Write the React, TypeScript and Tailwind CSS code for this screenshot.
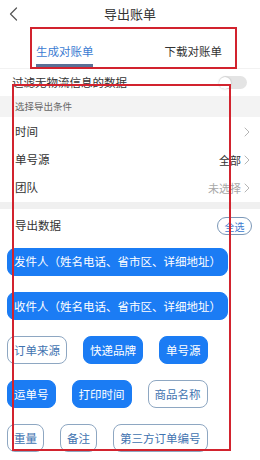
import React from 'react';

const font = { fontFamily: '"Noto Sans CJK SC", "Noto Sans", sans-serif' };

const Chevron = () => (
  <svg width="6" height="10" viewBox="0 0 6 10" fill="none" className="ml-[3px]">
    <path d="M1 1l4 4-4 4" stroke="#b5b5b5" strokeWidth="1" strokeLinecap="round" strokeLinejoin="round" />
  </svg>
);

const Row = ({ label, value, muted }: { label: string; value?: string; muted?: boolean }) => (
  <div className="flex h-[28px] items-center justify-between pl-[15px] pr-[10px]">
    <span className="text-[11.5px] text-[#333]">{label}</span>
    <div className="flex items-center">
      {value && <span className={`text-[11px] ${muted ? 'text-[#a8a8a8]' : 'text-[#333]'}`}>{value}</span>}
      <Chevron />
    </div>
  </div>
);

const Chip = ({ text, on }: { text: string; on?: boolean }) => (
  <div
    className={
      on
        ? 'flex h-[28px] items-center rounded-[8px] border border-[#1b7cf4] bg-[#1b7cf4] px-[6px] text-[11.5px] text-white'
        : 'flex h-[28px] items-center rounded-[8px] border border-[#8ea7c2] bg-white px-[6px] text-[11.5px] text-[#3f73b0]'
    }
  >
    {text}
  </div>
);

export default function App() {
  return (
    <div className="relative h-[460px] w-[260px] overflow-hidden bg-white" style={font}>
      {/* header */}
      <div className="relative flex h-[28px] items-center justify-center">
        <svg width="9" height="14" viewBox="0 0 9 14" fill="none" className="absolute left-[9px] top-[7px]">
          <path d="M7.5 1L1.5 7l6 6" stroke="#555" strokeWidth="1.2" strokeLinecap="round" strokeLinejoin="round" />
        </svg>
        <span className="text-[13px] text-[#333]">导出账单</span>
      </div>

      {/* tabs */}
      <div className="flex h-[40px] items-start">
        <div className="ml-[36px] flex flex-col items-center pt-[15px]">
          <span className="block text-[11.5px] leading-[16px] text-[#3b7cd2]">生成对账单</span>
          <div className="mt-[5px] h-[2.5px] w-[57px] bg-[#5a7096]" />
        </div>
        <div className="ml-auto mr-[38px] flex pt-[15px]">
          <span className="block text-[11.5px] leading-[16px] text-[#333]">下载对账单</span>
        </div>
      </div>

      {/* filter toggle */}
      <div className="flex h-[28px] items-center justify-between border-t border-[#f2f2f2] pl-[12px] pr-[13px]">
        <span className="text-[11.5px] text-[#333]">过滤无物流信息的数据</span>
        <div className="flex h-[13px] w-[28px] items-center rounded-full bg-[#e4e4e4]">
          <div className="h-[12px] w-[12px] rounded-full bg-white shadow-[0_0_2px_rgba(0,0,0,0.25)]" />
        </div>
      </div>

      {/* conditions */}
      <div className="flex h-[21px] items-center bg-[#f3f3f3] pl-[15px] text-[9.5px] text-[#666]">选择导出条件</div>
      <div className="pt-[1px]">
        <Row label="时间" />
        <Row label="单号源" value="全部" />
        <Row label="团队" value="未选择" muted />
      </div>
      <div className="h-[7px] bg-[#f0f0f0]" />

      {/* export data */}
      <div className="flex h-[34px] items-center justify-between pl-[15px] pr-[8px]">
        <span className="text-[11.5px] text-[#333]">导出数据</span>
        <div className="flex h-[18px] w-[35px] items-center justify-center rounded-full border border-[#7b98b8] text-[10px] text-[#3b7bd0]">
          全选
        </div>
      </div>

      <div className="mt-[4px] flex flex-wrap gap-x-4 gap-y-[16px] pl-[7px] pr-[4px]">
        <div className="w-full">
          <div className="inline-flex">
            <Chip text="发件人（姓名电话、省市区、详细地址）" on />
          </div>
        </div>
        <div className="w-full">
          <div className="inline-flex">
            <Chip text="收件人（姓名电话、省市区、详细地址）" on />
          </div>
        </div>
        <div className="flex w-full gap-x-4">
          <Chip text="订单来源" />
          <Chip text="快递品牌" on />
          <Chip text="单号源" on />
        </div>
        <div className="flex w-full gap-x-4">
          <Chip text="运单号" on />
          <Chip text="打印时间" on />
          <Chip text="商品名称" />
        </div>
        <div className="flex w-full gap-x-4">
          <Chip text="重量" />
          <Chip text="备注" />
          <Chip text="第三方订单编号" />
        </div>
      </div>

      {/* annotation boxes */}
      <div className="pointer-events-none absolute left-[30px] top-[27px] h-[42px] w-[207px] border-2 border-[#d2232e]" />
      <div className="pointer-events-none absolute left-[12px] top-[84px] h-[367px] w-[219px] border-2 border-[#d2232e]" />
    </div>
  );
}
